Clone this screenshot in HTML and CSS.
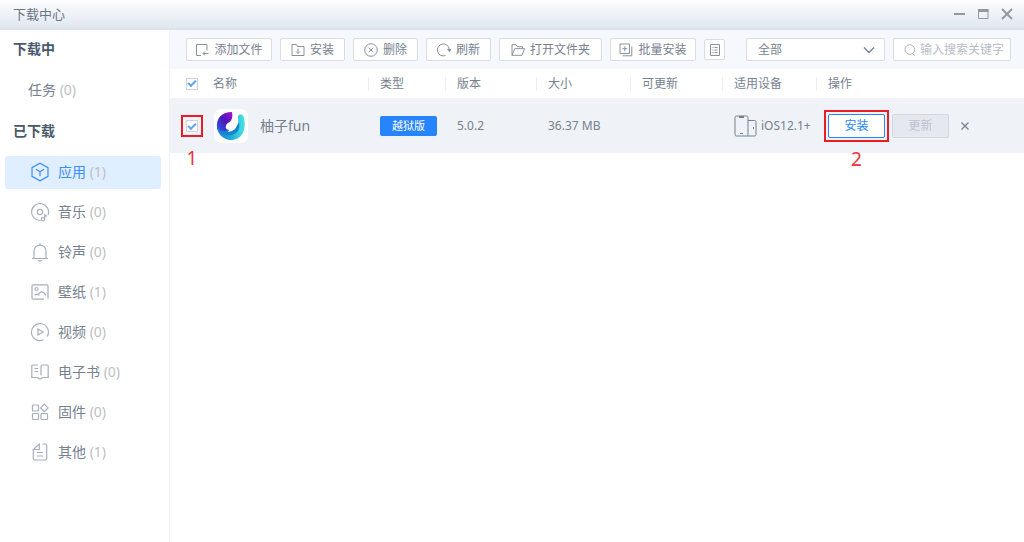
FILE: index.html
```html
<!DOCTYPE html>
<html lang="zh-CN">
<head>
<meta charset="utf-8">
<title>下载中心</title>
<link rel="stylesheet" href="styles.css">
</head>
<body>
<div class="app">
  <header class="titlebar">
    <h1 class="titlebar-name">下载中心</h1>
    <div class="window-controls">
      <button type="button" aria-label="最小化"><svg width="12" height="12" viewBox="0 0 12 12"><path d="M1 6h11" stroke-width="2"/></svg></button>
      <button type="button" aria-label="最大化"><svg width="12" height="12" viewBox="0 0 12 12"><path d="M1.500 2v8.500h9.500V2z"/><path d="M1 2.500h10.500" stroke-width="3"/></svg></button>
      <button type="button" aria-label="关闭"><svg width="12" height="12" viewBox="0 0 12 12"><path d="M1 1l10 10M11 1L1 11" stroke-width="1.900"/></svg></button>
    </div>
  </header>
  <div class="body">
    <nav class="sidebar">
      <h2 class="side-heading">下载中</h2>
      <a class="side-task" href="#task">任务 <span class="count">(0)</span></a>
      <h2 class="side-heading">已下载</h2>
      <ul class="side-list">
        <li><a class="side-item side-item-active" href="#app"><svg width="20" height="20" viewBox="0 0 20 20"><path d="M10 1.200l8 4.400v8.800l-8 4.400-8-4.400V5.600z"/><path d="M6 7.200l4 2.600 4-2.600M10 9.800v4.400"/></svg><span>应用 <span class="count">(1)</span></span></a></li>
        <li><a class="side-item" href="#music"><svg width="20" height="20" viewBox="0 0 20 20"><path d="M10.500 18.500A8.500 8.500 0 1 1 18 13"/><circle cx="10" cy="10" r="2.600"/><circle cx="13" cy="17.300" r="1.700"/><path d="M14.700 17.300v-5c.2 1.300 1.500 1.500 2.500 2"/></svg><span>音乐 <span class="count">(0)</span></span></a></li>
        <li><a class="side-item" href="#ring"><svg width="20" height="20" viewBox="0 0 20 20"><path d="M2 16.500h16M4 16.500V9a6 6 0 0 1 12 0v7.500M8 18.200c1 1.200 3 1.200 4 0M9 2h2"/></svg><span>铃声 <span class="count">(0)</span></span></a></li>
        <li><a class="side-item" href="#wallpaper"><svg width="20" height="20" viewBox="0 0 20 20"><path d="M14 17.200H3.200c-.8 0-1.200-.4-1.200-1.200V4c0-.8.400-1.200 1.200-1.200h13.600c.8 0 1.200.4 1.200 1.200v12.500"/><circle cx="6.500" cy="7" r="1.500"/><path d="M4.500 13c2.500-1.500 3.500 0 5 0M8.500 12c2.500-3.500 5-2.500 7.500 1.500"/></svg><span>壁纸 <span class="count">(1)</span></span></a></li>
        <li><a class="side-item" href="#video"><svg width="20" height="20" viewBox="0 0 20 20"><path d="M13.500 17.800A8.500 8.500 0 1 1 17.200 14.500"/><path d="M8 7l5 3-5 3z"/></svg><span>视频 <span class="count">(0)</span></span></a></li>
        <li><a class="side-item" href="#book"><svg width="20" height="20" viewBox="0 0 20 20"><path d="M8 3H2.800c-.6 0-1 .3-1 1v11.500H7c1.500 0 1.500 1.500 3 1.500s1.500-1.500 3-1.500h5.200V4c0-.7-.4-1-1-1h-4.700c-1 0-1.500.5-1.500 1.500v8.700M4.500 6.500H8M4.500 9.500H8"/></svg><span>电子书 <span class="count">(0)</span></span></a></li>
        <li><a class="side-item" href="#firmware"><svg width="20" height="20" viewBox="0 0 20 20"><rect x="2.500" y="3" width="6" height="6" rx=".7"/><rect x="2.500" y="11.500" width="6" height="6" rx=".7"/><rect x="11" y="11.500" width="6.500" height="6" rx=".7"/><path d="M14.300 2.200L18 5.900l-3.700 3.700-3.700-3.700z"/></svg><span>固件 <span class="count">(0)</span></span></a></li>
        <li><a class="side-item" href="#other"><svg width="20" height="20" viewBox="0 0 20 20"><path d="M12.500 2h3c.8 0 1.200.4 1.200 1.200v13.600c0 .8-.4 1.200-1.200 1.200h-11c-.8 0-1.200-.4-1.200-1.200V7.500L9.300 2v5.500H3.500M7 10.500h6M7 14h6"/></svg><span>其他 <span class="count">(1)</span></span></a></li>
      </ul>
    </nav>
    <main class="content">
      <div class="toolbar">
        <button type="button" class="tool tool-four"><svg width="14" height="14" viewBox="0 0 14 14"><path d="M6 12.500H1.500v-11h10.500v6M13.500 10.500H8M10 8.500l-2 2 2 2"/></svg>添加文件</button>
        <button type="button" class="tool"><svg width="14" height="14" viewBox="0 0 14 14"><path d="M1 12.500V1.500h4.500l1 2H13v9zM7 5.500v5M5 8.500l2 2 2-2"/></svg>安装</button>
        <button type="button" class="tool"><svg width="14" height="14" viewBox="0 0 14 14"><circle cx="7" cy="7" r="6.300"/><path d="M4.700 4.700l4.600 4.600M9.300 4.700L4.700 9.300"/></svg>删除</button>
        <button type="button" class="tool"><svg width="14" height="14" viewBox="0 0 14 14"><path d="M8.500 12.500A6 6 0 1 1 12.300 6.500"/><path d="M10 6h4.500l-2.200 3z" fill="currentColor" stroke="none"/></svg>刷新</button>
        <button type="button" class="tool tool-five"><svg width="14" height="14" viewBox="0 0 14 14"><path d="M1 12.300V1.700h4l1.500 2h5v2M1 12.300l2.700-6.600h9.800l-2.500 6.600z"/></svg>打开文件夹</button>
        <button type="button" class="tool tool-four"><svg width="14" height="14" viewBox="0 0 14 14"><path d="M1 1h9.500v9.500H1zM12.800 3.500v9.300H3.500M3.300 5.700h5M5.800 3.300v5"/></svg>批量安装</button>
        <button type="button" class="tool tool-icon" aria-label="列表"><svg width="12" height="12" viewBox="0 0 12 12"><path d="M1.500.5h9v11h-9zM3.500 3.500h1M5.500 3.500h3M3.500 6h1M5.500 6h3M3.500 8.500h1M5.500 8.500h3"/></svg></button>
        <div class="filter">
          <select class="filter-select" aria-label="筛选"><option>全部</option></select>
          <svg class="filter-arrow" width="12" height="8" viewBox="0 0 12 8"><path d="M1 1.500l5 5 5-5"/></svg>
        </div>
        <label class="search">
          <svg width="12" height="12" viewBox="0 0 12 12"><circle cx="5.800" cy="5.500" r="4.800"/><path d="M8.500 9.500L11 11.500"/></svg>
          <input class="search-input" type="text" placeholder="输入搜索关键字" aria-label="搜索">
        </label>
      </div>
      <table class="files">
        <colgroup><col class="col-check"><col class="col-name"><col class="col-type"><col class="col-version"><col class="col-size"><col class="col-update"><col class="col-device"><col></colgroup>
        <thead>
          <tr>
            <th class="cell-check"><input type="checkbox" class="check" checked aria-label="全选"></th>
            <th class="cell-name">名称</th><th>类型</th><th>版本</th><th>大小</th><th>可更新</th><th>适用设备</th><th>操作</th>
          </tr>
        </thead>
        <tbody>
          <tr>
            <td class="cell-check"><span class="mark"><input type="checkbox" class="check" checked aria-label="选择柚子fun"><span class="mark-box mark-box-check"><span class="mark-number">1</span></span></span></td>
            <td class="cell-name">
              <div class="name">
                <svg class="logo" width="34" height="34" viewBox="0 0 34 34">
                  <defs>
                    <linearGradient id="ring" x1="0" y1="0" x2="1" y2="0"><stop offset="0" stop-color="#2878dc"/><stop offset=".45" stop-color="#1ba6d4"/><stop offset="1" stop-color="#48e6e4"/></linearGradient>
                    <linearGradient id="leaf" x1="1" y1="0" x2="0" y2="1"><stop offset="0" stop-color="#a516d4"/><stop offset=".45" stop-color="#4b16b8"/><stop offset="1" stop-color="#2a62f0"/></linearGradient>
                  </defs>
                  <rect width="34" height="34" rx="7" fill="#fff"/>
                  <path d="M3 15C2 24 9 31 17 31c10 0 16-9 13-22-1-5-7-4-6 0 1 6-1 12-7 13z" fill="url(#ring)"/>
                  <path d="M18 3C8 3 2 9 3 19c1 4 5 6 9 4l2-1c-3-2-3-6 0-8 4-2 5-6 4-11z" fill="url(#leaf)"/>
                  <path d="M3 18c4 6 11 4 14 2 5-2 7-4 8-7 2 11-6 14-13 13-5-1-8-4-9-8z" fill="#1682cf"/>
                  <path d="M20 9l-7 8h4l-3 6c6-1 9-4 9-8h-4z" fill="#fff"/>
                </svg>
                <span>柚子fun</span>
              </div>
            </td>
            <td><span class="tag">越狱版</span></td>
            <td>5.0.2</td>
            <td>36.37 MB</td>
            <td></td>
            <td>
              <div class="device"><svg width="23" height="22" viewBox="0 0 23 22"><rect x="1" y="1" width="13" height="20" rx="1.500"/><path d="M5 2h5" stroke-width="2"/><path d="M6 18.500h3M14 5.500h6.500c1 0 1.500.5 1.500 1.500v12.500c0 1-.5 1.500-1.500 1.500H13M19.500 12v2"/></svg><span>iOS12.1+</span></div>
            </td>
            <td>
              <div class="actions">
                <span class="mark"><button type="button" class="action action-install">安装</button><span class="mark-box"><span class="mark-number">2</span></span></span>
                <button type="button" class="action action-update" disabled>更新</button>
                <button type="button" class="remove" aria-label="移除"><svg width="10" height="10" viewBox="0 0 10 10"><path d="M1.500 1.500l7 7M8.500 1.500l-7 7"/></svg></button>
              </div>
            </td>
          </tr>
        </tbody>
      </table>
    </main>
  </div>
</div>
</body>
</html>
```
FILE: styles.css
```css
* { box-sizing: border-box; }

body {
  margin: 0;
  background: #fff;
  color: #768190;
  font: 12px/20px "Noto Sans", "Noto Sans CJK SC", sans-serif;
}

button, input, select { font: inherit; color: inherit; margin: 0; }
button { padding: 0; border: 0; background: none; }
a { color: inherit; text-decoration: none; }
svg { flex: none; display: block; fill: none; stroke: currentColor; }

.app { display: flex; flex-direction: column; min-height: 100vh; }

.titlebar {
  display: flex;
  align-items: center;
  justify-content: space-between;
  height: 30px;
  padding: 0 11px 0 13px;
  border-bottom: 2px solid #dbe2ea;
  background: linear-gradient(#fcfdfe, #e1e7f0);
}
.titlebar-name { margin: 0; font-size: 13px; font-weight: 400; color: #6b7686; }
.window-controls { display: flex; gap: 12px; color: #9299a5; }

.body { display: flex; flex: 1; }

.sidebar {
  flex: none;
  width: 170px;
  padding: 9px 8px 0 5px;
  border-right: 1px solid #f0f2f5;
  font-size: 14px;
}
.side-heading { margin: 0 0 0 8px; font-size: 14px; line-height: 20px; font-weight: 700; color: #4a586b; }
.side-task { display: block; margin: 21px 0 21px 23px; }
.count { color: #bdbfc4; }
.side-list { display: grid; gap: 7px; margin: 15px 0 0; padding: 0; list-style: none; }
.side-item { display: flex; align-items: center; gap: 8px; height: 33px; padding: 0 0 2px 25px; border-radius: 3px; }
.side-item svg { color: #a5afbf; stroke-width: 1.2; }
.side-item-active { background: #e0efff; color: #3b8cff; }
.side-item-active svg { color: #3b8cff; }

.content { flex: 1; min-width: 0; }

.toolbar { display: flex; align-items: center; gap: 8px; height: 39px; padding: 0 13px 0 16px; background: #f5f8fc; }
.tool {
  display: flex;
  flex: none;
  align-items: center;
  justify-content: center;
  gap: 5px;
  width: 65px;
  height: 23px;
  border: 1px solid #d8dce3;
  border-radius: 2px;
  background: #fff;
  white-space: nowrap;
}
.tool svg { color: #88919e; }
.tool-four { width: 86px; }
.tool-five { width: 103px; }
.tool-icon { width: 21px; height: 21px; }

.filter { position: relative; flex: 0 1 139px; margin-left: auto; }
.filter-select {
  display: block;
  width: 100%;
  height: 23px;
  padding: 0 11px;
  border: 1px solid #d8dce3;
  border-radius: 2px;
  background: #fff;
  appearance: none;
}
.filter-arrow { position: absolute; top: 8px; right: 10px; pointer-events: none; stroke-width: 1.4; }
.search {
  display: flex;
  flex: none;
  align-items: center;
  gap: 4px;
  width: 118px;
  height: 23px;
  padding-left: 10px;
  border: 1px solid #d8dce3;
  border-radius: 2px;
  background: #fff;
  color: #aab1bc;
}
.search-input { flex: 1; width: 0; min-width: 0; height: 20px; padding: 0; border: 0; outline: 0; background: none; }
.search-input::placeholder { color: #b6bcc6; }

.files { width: 100%; border-collapse: collapse; table-layout: fixed; }
.col-check { width: 42px; }
.col-name { width: 156px; }
.col-type { width: 77px; }
.col-version { width: 91px; }
.col-size { width: 94px; }
.col-update { width: 92px; }
.col-device { width: 94px; }
.files th {
  height: 29px;
  padding: 0 0 0 12px;
  background: linear-gradient(#eceef2, #eceef2) 0 50% / 1px 14px no-repeat;
  font-weight: 400;
  text-align: left;
}
.files td { height: 55px; padding: 0 0 0 12px; background: #eff2f7; white-space: nowrap; }
.files .cell-check { padding-left: 16px; background-size: 0; }
.files .cell-name { padding-left: 1px; background-size: 0; }

.check {
  display: grid;
  place-items: center;
  width: 12px;
  height: 12px;
  border: 1px solid #cbd3de;
  background: #fff;
  appearance: none;
}
.check:checked::before {
  content: "";
  width: 6px;
  height: 3px;
  border: solid #5a9fff;
  border-width: 0 0 2px 2px;
  transform: translateY(-1px) rotate(-45deg);
}

.name { display: flex; align-items: center; gap: 12px; padding-left: 1px; font-size: 14px; }
.logo { stroke: none; }
.tag { display: block; width: 57px; border-radius: 2px; background: #2684ff; color: #fff; font-size: 11px; text-align: center; }
.device { display: flex; align-items: center; gap: 4px; }

.actions { display: flex; align-items: center; gap: 7px; }
.action { display: block; width: 57px; height: 24px; border: 1px solid #d3d8e0; border-radius: 2px; }
.action-install { border-color: #2684ff; background: #fff; color: #2684ff; }
.action-update { background: #e5e9ef; color: #bbc2cd; }
.remove { margin-left: 4px; }
.remove svg { stroke-width: 1.3; }

.mark { position: relative; display: inline-block; vertical-align: middle; }
.mark-box { position: absolute; inset: -4px; border: 2px solid #ea1c24; pointer-events: none; }
.mark-box-check { inset: -5px; }
.mark-number { position: absolute; top: 100%; left: 0; right: 0; margin-top: 9px; color: #f03238; font-size: 19px; text-align: center; }
.mark-box-check .mark-number { margin-top: 13px; }
```
